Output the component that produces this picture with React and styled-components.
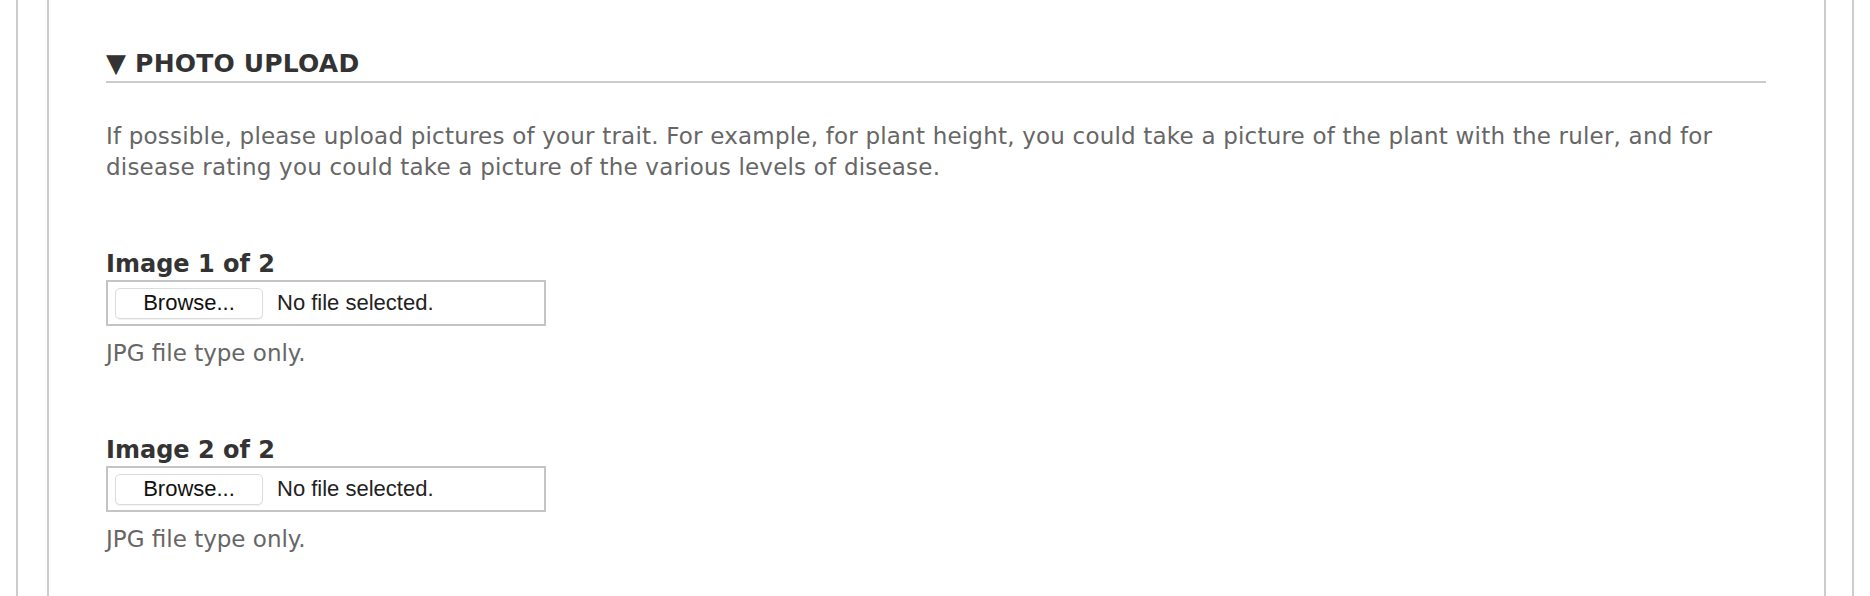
import React from "react";
import styled, { createGlobalStyle } from "styled-components";

const GlobalStyle = createGlobalStyle`
  html,
  body {
    margin: 0;
    padding: 0;
    background: #fff;
  }

  body {
    font-family: "DejaVu Sans", "Liberation Sans", sans-serif;
  }
`;

const fields = [
  { id: "image-1", label: "Image 1 of 2" },
  { id: "image-2", label: "Image 2 of 2" },
];

const App = () => {
  return (
    <>
      <GlobalStyle />
      <Page>
        <Frame>
          <Panel>
            <Heading>
              <Caret>▼</Caret> PHOTO UPLOAD
            </Heading>
            <Intro>
              If possible, please upload pictures of your trait. For example,
              for plant height, you could take a picture of the plant with the
              ruler, and for disease rating you could take a picture of the
              various levels of disease.
            </Intro>
            <Fields>
              {fields.map((field) => (
                <Field key={field.id}>
                  <Label htmlFor={field.id}>{field.label}</Label>
                  <FileBox htmlFor={field.id}>
                    <HiddenInput id={field.id} type="file" accept=".jpg,.jpeg" />
                    <BrowseButton>Browse...</BrowseButton>
                    <FileStatus>No file selected.</FileStatus>
                  </FileBox>
                  <Hint>JPG file type only.</Hint>
                </Field>
              ))}
            </Fields>
          </Panel>
        </Frame>
      </Page>
    </>
  );
};

const Page = styled.div`
  padding: 0 16px;
  height: 596px;
  box-sizing: border-box;
`;

const Frame = styled.div`
  height: 100%;
  border-left: 2px solid #cccccc;
  border-right: 2px solid #cccccc;
  padding: 0 26px 0 29px;
`;

const Panel = styled.div`
  height: 100%;
  border-left: 2px solid #cccccc;
  border-right: 2px solid #cccccc;
  padding: 48px 58px 0 57px;
  box-sizing: border-box;
`;

const Heading = styled.h2`
  margin: 0;
  padding-bottom: 2px;
  border-bottom: 2px solid #cccccc;

  color: #333333;
  font-family: "DejaVu Sans", sans-serif;
  font-size: 25px;
  font-weight: 700;
  line-height: 30px;
  letter-spacing: 0.2px;
`;

const Caret = styled.span`
  font-size: 26px;
  line-height: 30px;
`;

const Intro = styled.p`
  margin: 38px 0 0;

  color: #666666;
  font-family: "DejaVu Sans", sans-serif;
  font-size: 23px;
  font-weight: 400;
  line-height: 31px;
  letter-spacing: 0.2px;
`;

const Fields = styled.div`
  display: flex;
  flex-direction: column;
  gap: 68px;

  margin-top: 67px;
`;

const Field = styled.div`
  display: flex;
  flex-direction: column;
  align-items: flex-start;
`;

const Label = styled.label`
  color: #333333;
  font-family: "DejaVu Sans", sans-serif;
  font-size: 24px;
  font-weight: 700;
  line-height: 28px;
`;

const FileBox = styled.label`
  display: flex;
  align-items: center;
  gap: 14px;

  width: 440px;
  height: 46px;
  margin-top: 2px;
  padding: 0 7px;
  box-sizing: border-box;

  border: 2px solid #c4c4c4;
  background: #ffffff;
  cursor: pointer;
`;

const HiddenInput = styled.input`
  display: none;
`;

const BrowseButton = styled.span`
  display: flex;
  align-items: center;
  justify-content: center;

  width: 148px;
  height: 31px;
  box-sizing: border-box;

  border: 1px solid #dcdcdc;
  border-radius: 5px;
  background: #ffffff;
  box-shadow: 0 1px 1px rgba(0, 0, 0, 0.06);

  color: #111111;
  font-family: "Liberation Sans", Arial, sans-serif;
  font-size: 22px;
`;

const FileStatus = styled.span`
  color: #222222;
  font-family: "Liberation Sans", Arial, sans-serif;
  font-size: 22px;
`;

const Hint = styled.div`
  margin-top: 12px;

  color: #666666;
  font-family: "DejaVu Sans", sans-serif;
  font-size: 23px;
  line-height: 30px;
`;

export default App;
